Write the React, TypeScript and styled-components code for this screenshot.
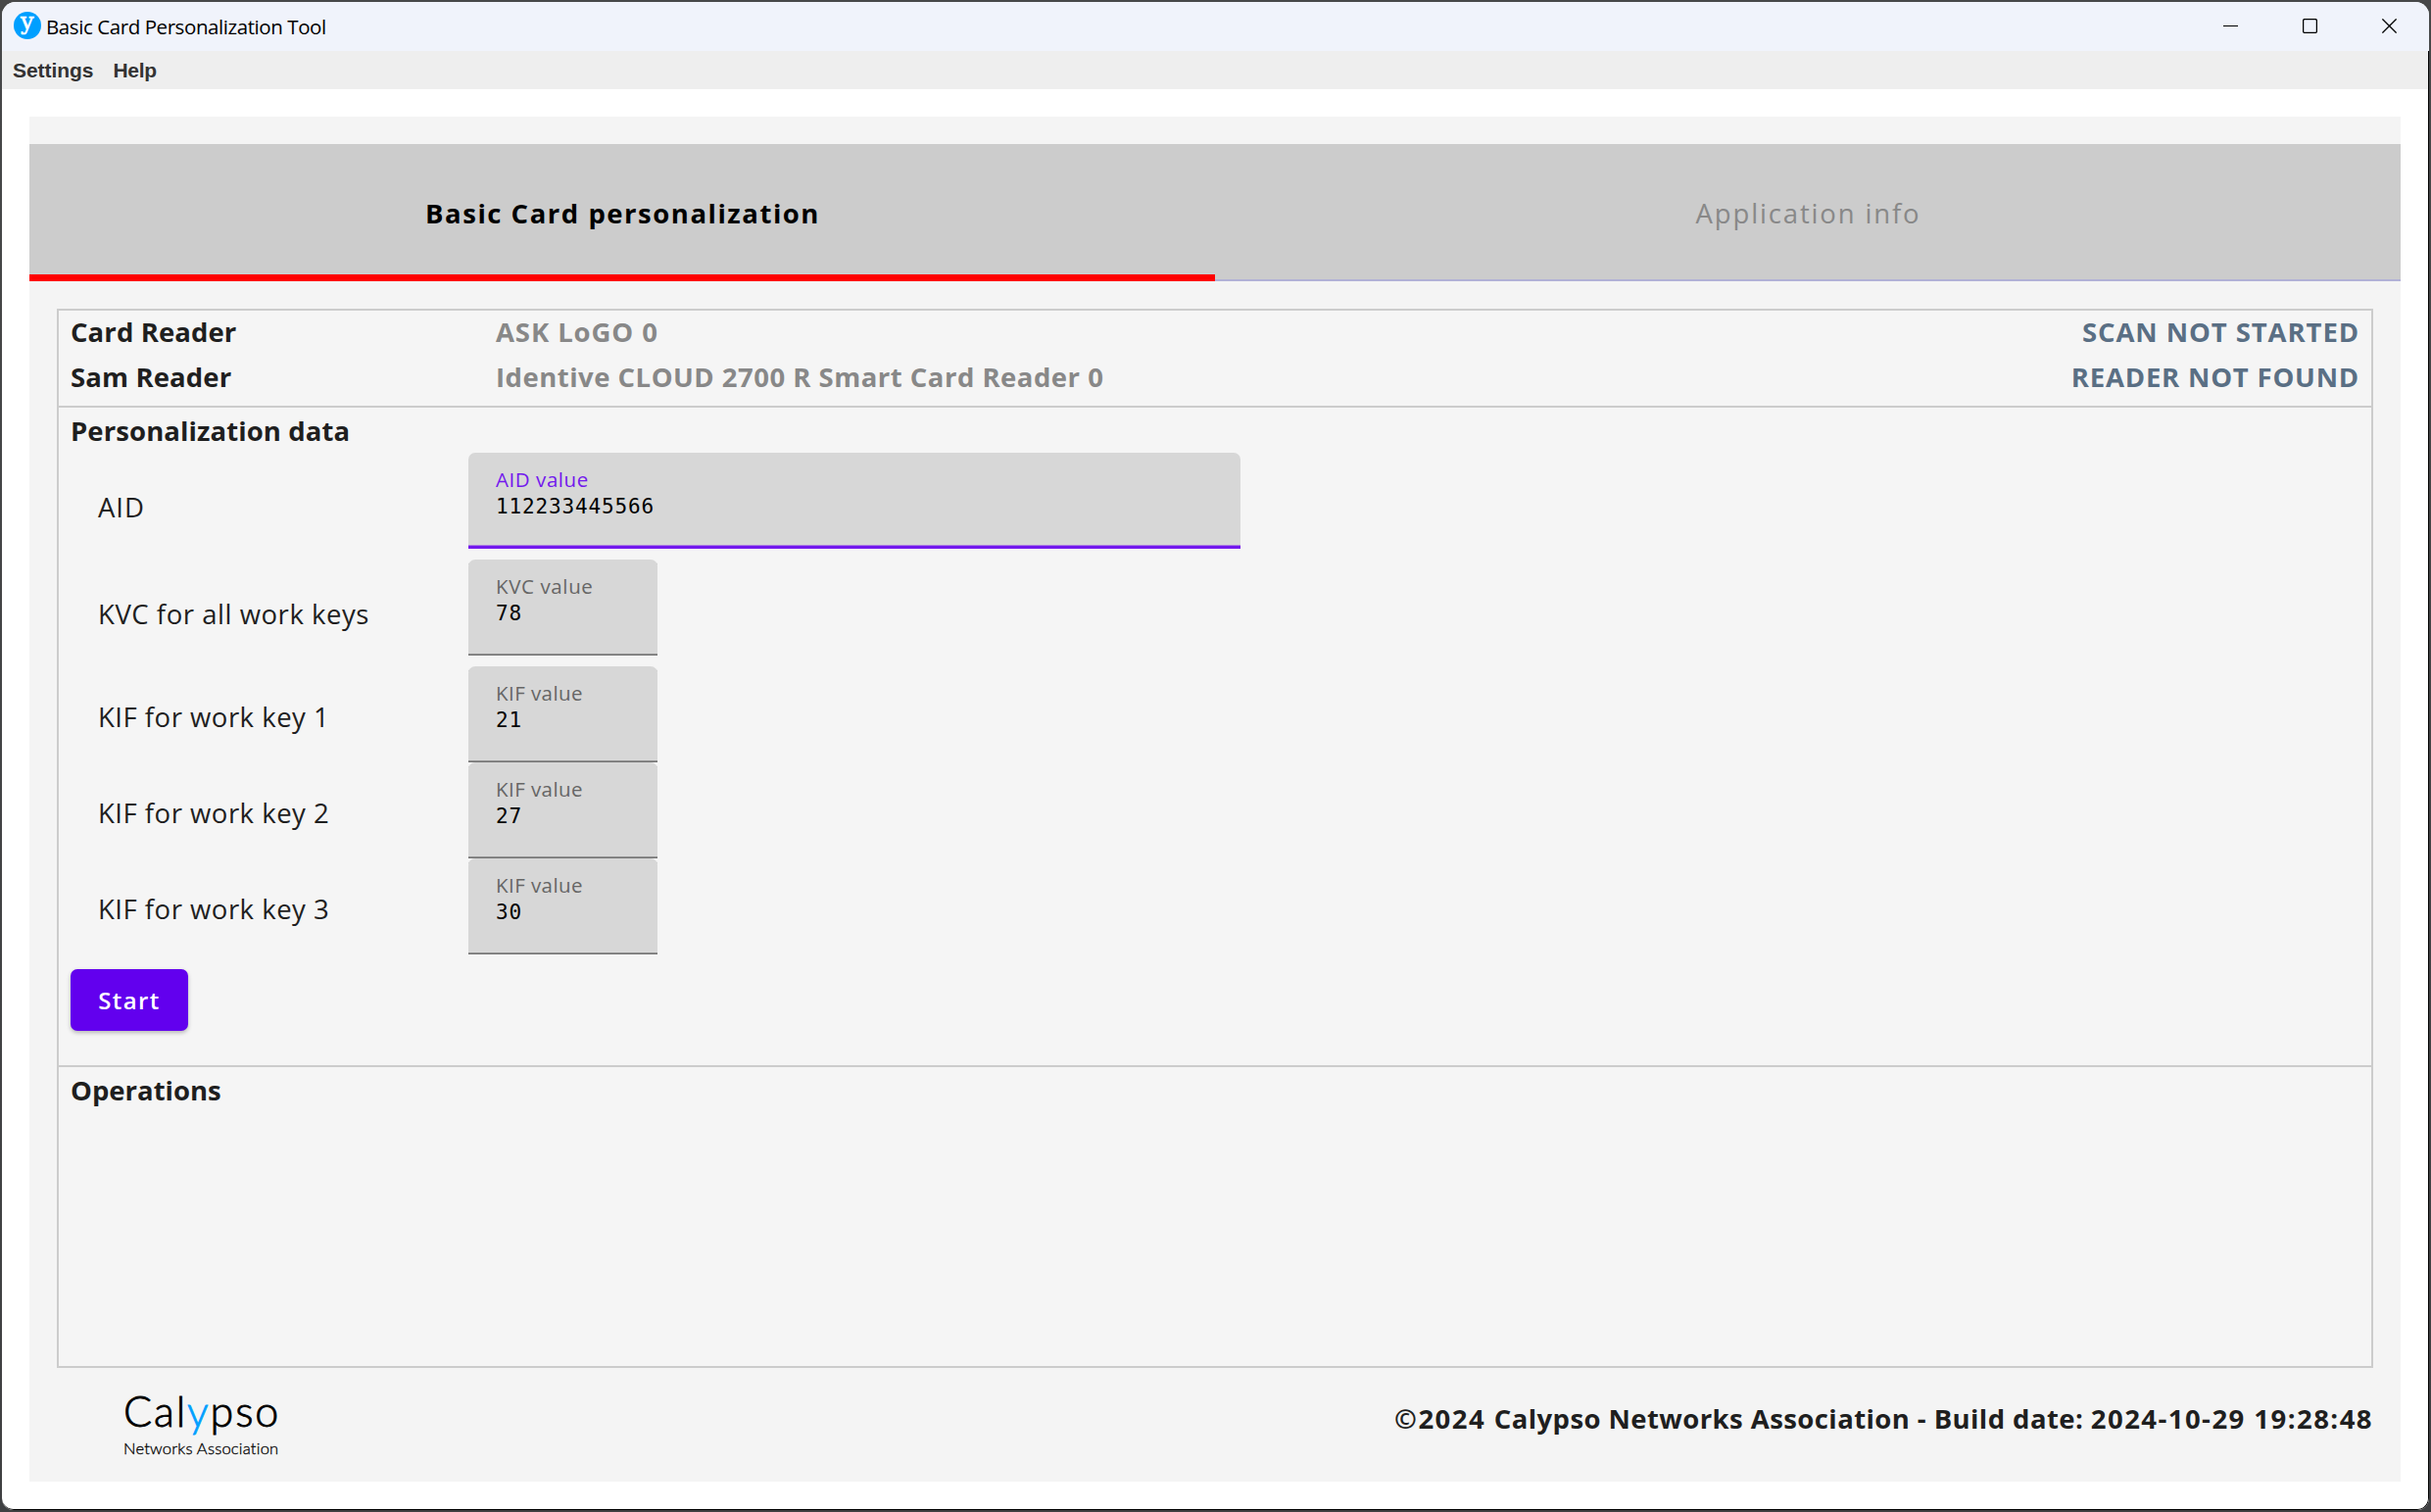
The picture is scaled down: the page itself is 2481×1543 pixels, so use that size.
import React from 'react';
import styled, { createGlobalStyle } from 'styled-components';

const GlobalStyle = createGlobalStyle`
  * { box-sizing: border-box; }
  html, body { margin: 0; padding: 0; }
  body { background: #434446; font-family: 'Open Sans', 'Noto Sans', sans-serif; }
`;

const Desktop = styled.div`
  width: 2481px;
  height: 1543px;
  padding: 2px;
  background: linear-gradient(180deg, #474849 0%, #3f4042 100%);
`;

const Window = styled.div`
  display: flex;
  flex-direction: column;
  width: 2477px;
  height: 1539px;
  overflow: hidden;
  border-radius: 14px 14px 12px 12px;
  background: #ffffff;
`;

const TitleBar = styled.header`
  display: flex;
  align-items: center;
  flex: 0 0 50px;
  padding-left: 12px;
  background: #f0f3fb;
`;

const AppIcon = styled.svg`
  flex: none;
  width: 28px;
  height: 28px;
  margin: 0 5px 2px 0;
  overflow: visible;
`;

const WindowTitle = styled.span`
  flex: 1;
  font-size: 20.5px;
  line-height: 30px;
  letter-spacing: -0.42px;
  color: #000000;
`;

const Controls = styled.div`
  display: flex;
  height: 100%;
`;

const ControlButton = styled.button`
  display: flex;
  justify-content: center;
  align-items: center;
  width: 81px;
  height: 100%;
  padding: 0 0 1px;
  border: 0;
  background: none;
`;

const Body = styled.div`
  display: flex;
  flex-direction: column;
  flex: 1;
  border-right: 1px solid #000000;
  border-bottom: 1px solid #000000;
  border-radius: 0 0 12px 12px;
`;

const MenuBar = styled.nav`
  display: flex;
  gap: 20px;
  align-items: center;
  flex: 0 0 39px;
  padding-left: 11px;
  background: #eeeeee;
`;

const MenuItem = styled.span<{ $spacing: number }>`
  font: 700 21px/30px 'Liberation Sans', Arial, sans-serif;
  letter-spacing: ${(p) => p.$spacing}px;
  color: #333333;
`;

const Content = styled.main`
  display: flex;
  flex-direction: column;
  flex: 1;
  margin: 28px;
  padding-top: 28px;
  background: #f4f4f4;
`;

const TabRow = styled.div`
  display: grid;
  grid-template-columns: 1fr 1fr;
  flex: 0 0 140px;
  background: #cccccc;
`;

const Tab = styled.div<{ $active?: boolean }>`
  display: flex;
  justify-content: center;
  align-items: center;
  padding: 2px 0 0 1px;
  font-size: 27.5px;
  line-height: 40px;
  font-weight: ${(p) => (p.$active ? 700 : 400)};
  letter-spacing: ${(p) => (p.$active ? 1.52 : 1.85)}px;
  color: ${(p) => (p.$active ? '#000000' : '#888888')};
  box-shadow: inset 0 ${(p) => (p.$active ? '-7px #ff0000' : '-2px #b1b1d6')};
`;

const Card = styled.div`
  display: flex;
  flex-direction: column;
  flex: 1;
  margin: 28px 28px 0;
  border: 2px solid #cccccc;
  background: #f5f5f5;
`;

const Section = styled.section<{ $height?: number }>`
  flex: ${(p) => (p.$height ? `0 0 ${p.$height}px` : '1')};
  padding: 4px 12px 0;
  & + & { border-top: 2px solid #cccccc; }
`;

const ReaderSection = styled(Section)`
  display: flex;
  flex-direction: column;
  gap: 6px;
  padding-top: 2px;
`;

const ReaderRow = styled.div`
  display: grid;
  grid-template-columns: 434px 1fr auto;
`;

const BoldText = styled.div<{ $spacing: number; $color?: string }>`
  font-size: 27.5px;
  line-height: 40px;
  font-weight: 700;
  letter-spacing: ${(p) => p.$spacing}px;
  color: ${(p) => p.$color ?? '#1f1f1f'};
`;

const Form = styled.div`
  display: flex;
  flex-direction: column;
  gap: 11px;
  margin-top: 2px;
`;

const KifGroup = styled.div`
  display: flex;
  flex-direction: column;
`;

const FieldRow = styled.label<{ $shift: number }>`
  display: grid;
  grid-template-columns: 406px auto;
  justify-content: start;
  align-items: center;
  height: 98px;

  & > span:first-child { padding-top: ${(p) => p.$shift}px; }
`;

const FieldCaption = styled.span<{ $spacing: number }>`
  padding-left: 28px;
  font-size: 27.5px;
  line-height: 40px;
  letter-spacing: ${(p) => p.$spacing}px;
  color: #1f1f1f;
`;

const FieldBox = styled.span<{ $wide?: boolean }>`
  display: flex;
  flex-direction: column;
  width: ${(p) => (p.$wide ? 788 : 193)}px;
  height: 98px;
  padding: 14px 28px 0;
  border-radius: 7px 7px 0 0;
  background: #d7d7d7;
  box-shadow: ${(p) =>
    p.$wide
      ? 'inset 0 -3px #7319ed, inset 0 -4px #ac7de3'
      : 'inset 0 -1px #777777, inset 0 -2px #8e8e8e'};
`;

const FieldLabel = styled.span<{ $focused?: boolean; $spacing: number }>`
  font-size: 20.5px;
  line-height: 26px;
  letter-spacing: ${(p) => p.$spacing}px;
  color: ${(p) => (p.$focused ? '#7319ed' : '#666666')};
`;

const FieldValue = styled.span`
  font: 400 21px/30px 'DejaVu Sans Mono', monospace;
  letter-spacing: 0.86px;
  color: #000000;
`;

const StartButton = styled.button`
  display: block;
  width: 120px;
  height: 63px;
  margin-top: 15px;
  padding: 0;
  border: 0;
  border-radius: 7px;
  background: #6200ee;
  box-shadow: 0 2px 4px rgba(0, 0, 0, 0.26);
  color: #ffffff;
  font: 650 24px/40px 'Open Sans', sans-serif;
  letter-spacing: 1.4px;
`;

const Footer = styled.footer`
  display: flex;
  justify-content: space-between;
  flex: 0 0 116px;
  padding: 0 28px 0 95px;
`;

const Logo = styled.div`
  display: flex;
  flex-direction: column;
  padding: 22px 0 0 1px;
  font-family: Lato, sans-serif;
  color: #000000;
`;

const LogoName = styled.span`
  font-size: 43px;
  line-height: 44px;
  font-weight: 300;
  letter-spacing: 1.9px;
  -webkit-text-stroke: 0.8px;
`;

const LogoAccent = styled.span`
  color: #009fff;
`;

const LogoTagline = styled.span`
  margin-top: 6px;
  font-size: 16.5px;
  line-height: 20px;
  font-weight: 300;
  letter-spacing: 0.23px;
  -webkit-text-stroke: 0.3px;
`;

const Copyright = styled(BoldText)`
  padding-top: 32px;
`;

const Figures = styled.span`
  letter-spacing: 1.45px;
`;

interface FieldProps {
  caption: string;
  label: string;
  value: string;
  shift: number;
  captionSpacing: number;
  labelSpacing: number;
  focused?: boolean;
}

function Field({ caption, label, value, shift, captionSpacing, labelSpacing, focused }: FieldProps) {
  return (
    <FieldRow $shift={shift}>
      <FieldCaption $spacing={captionSpacing}>{caption}</FieldCaption>
      <FieldBox $wide={focused}>
        <FieldLabel $focused={focused} $spacing={labelSpacing}>{label}</FieldLabel>
        <FieldValue>{value}</FieldValue>
      </FieldBox>
    </FieldRow>
  );
}

const kifFields = [
  { caption: 'KIF for work key 1', value: '21' },
  { caption: 'KIF for work key 2', value: '27' },
  { caption: 'KIF for work key 3', value: '30' },
];

export default function App() {
  return (
    <Desktop>
      <GlobalStyle />
      <Window>
        <TitleBar>
          <AppIcon viewBox="0 0 28 28">
            <circle cx="14" cy="14" r="14" fill="#009fff" />
            <text x="13.8" y="18" textAnchor="middle" fontFamily="DejaVu Serif" fontSize="24" fill="#ffffff" stroke="#ffffff" strokeWidth="0.6">y</text>
          </AppIcon>
          <WindowTitle>Basic Card Personalization Tool</WindowTitle>
          <Controls>
            <ControlButton aria-label="Minimize">
              <svg width="15" height="15" viewBox="0 0 15 15"><path d="M0 7.5h15" stroke="#000" /></svg>
            </ControlButton>
            <ControlButton aria-label="Maximize">
              <svg width="15" height="15" viewBox="0 0 15 15"><rect x=".6" y=".6" width="13.8" height="13.8" rx="1.5" fill="none" stroke="#000" strokeWidth="1.3" /></svg>
            </ControlButton>
            <ControlButton aria-label="Close">
              <svg width="15" height="15" viewBox="0 0 15 15"><path d="M.4.4l14.2 14.2M14.6.4L.4 14.6" stroke="#000" strokeWidth="1.3" /></svg>
            </ControlButton>
          </Controls>
        </TitleBar>
        <Body>
          <MenuBar>
            <MenuItem $spacing={-0.05}>Settings</MenuItem>
            <MenuItem $spacing={-0.3}>Help</MenuItem>
          </MenuBar>
          <Content>
            <TabRow>
              <Tab $active>Basic Card personalization</Tab>
              <Tab>Application info</Tab>
            </TabRow>
            <Card>
              <ReaderSection $height={97}>
                <ReaderRow>
                  <BoldText $spacing={0.1}>Card Reader</BoldText>
                  <BoldText $spacing={0.9} $color="#888888">ASK LoGO 0</BoldText>
                  <BoldText $spacing={0.92} $color="#5a6f84">SCAN NOT STARTED</BoldText>
                </ReaderRow>
                <ReaderRow>
                  <BoldText $spacing={0.12}>Sam Reader</BoldText>
                  <BoldText $spacing={0.49} $color="#888888">Identive CLOUD 2700 R Smart Card Reader 0</BoldText>
                  <BoldText $spacing={0.8} $color="#5a6f84">READER NOT FOUND</BoldText>
                </ReaderRow>
              </ReaderSection>
              <Section $height={673}>
                <BoldText $spacing={0.09}>Personalization data</BoldText>
                <Form>
                  <Field caption="AID" label="AID value" value="112233445566" shift={14} captionSpacing={0.96} labelSpacing={0.55} focused />
                  <Field caption="KVC for all work keys" label="KVC value" value="78" shift={14} captionSpacing={0.54} labelSpacing={0.62} />
                  <KifGroup>
                    {kifFields.map((f) => (
                      <Field key={f.caption} caption={f.caption} label="KIF value" value={f.value} shift={5} captionSpacing={0.5} labelSpacing={0.43} />
                    ))}
                  </KifGroup>
                </Form>
                <StartButton>Start</StartButton>
              </Section>
              <Section>
                <BoldText $spacing={0}>Operations</BoldText>
              </Section>
            </Card>
            <Footer>
              <Logo>
                <LogoName>Cal<LogoAccent>y</LogoAccent>pso</LogoName>
                <LogoTagline>Networks Association</LogoTagline>
              </Logo>
              <Copyright $spacing={0.42}>
                <Figures>©2024 </Figures>Calypso Networks Association - Build date: <Figures>2024-10-29 19:28:48</Figures>
              </Copyright>
            </Footer>
          </Content>
        </Body>
      </Window>
    </Desktop>
  );
}
